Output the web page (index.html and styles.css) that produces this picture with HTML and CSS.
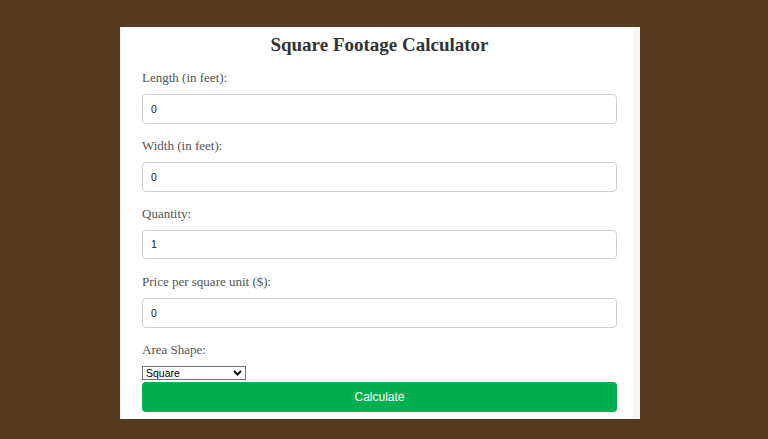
FILE: index.html
```html
<!DOCTYPE html>
<html lang="en">
<head>
<meta charset="utf-8">
<title>Square Footage Calculator</title>
<link rel="stylesheet" href="styles.css">
</head>
<body>
<div class="page">
  <div class="card">
    <h2 class="title">Square Footage Calculator</h2>
    <label class="label" for="length">Length (in feet):</label>
    <input class="field" id="length" type="number" value="0">
    <label class="label" for="width">Width (in feet):</label>
    <input class="field" id="width" type="number" value="0">
    <label class="label" for="qty">Quantity:</label>
    <input class="field" id="qty" type="number" value="1">
    <label class="label label--spaced" for="price">Price per square unit ($):</label>
    <input class="field" id="price" type="number" value="0">
    <label class="label" for="shape">Area Shape:</label>
    <div class="select-wrap">
      <select class="select" id="shape">
        <option>Square</option>
        <option>Rectangle</option>
        <option>Circle</option>
      </select>
      <svg class="chevron" width="9" height="6" viewBox="0 0 9 6" aria-hidden="true"><path d="M1 1l3.5 3.5L8 1" fill="none" stroke="#111" stroke-width="2"/></svg>
    </div>
    <button class="btn" type="button">Calculate</button>
  </div>
</div>
</body>
</html>
```
FILE: styles.css
```css
html, body {
  margin: 0;
  padding: 0;
}
body {
  background: #573a22;
  font-family: "Liberation Serif", "Times New Roman", serif;
  height: 439px;
  overflow: hidden;
}
.page {
  padding: 27px 0 0 120px;
}
.card {
  width: 520px;
  height: 392px;
  box-sizing: border-box;
  background: #fff;
  border-left: 2px solid #edf3f9;
  border-right: 7px solid #f6f6f7;
  padding: 7px 16px 7px 20px;
  display: flex;
  flex-direction: column;
  align-items: stretch;
}
.title {
  margin: 0 0 14px;
  font-size: 19px;
  line-height: 22px;
  font-weight: bold;
  color: #333;
  text-align: center;
}
.label {
  display: block;
  font-size: 13px;
  line-height: 16px;
  color: #555;
  margin: 0 0 8px;
}
.label--spaced {
  margin-top: 1px;
}
.field {
  display: block;
  box-sizing: border-box;
  width: 100%;
  height: 30px;
  margin: 0 0 14px;
  padding: 0 8px;
  border: 1px solid #d0d0d0;
  border-radius: 4px;
  background: #fff;
  font-family: "Liberation Sans", Arial, sans-serif;
  font-size: 10.5px;
  color: #222;
  -moz-appearance: textfield;
}
.field::-webkit-outer-spin-button,
.field::-webkit-inner-spin-button {
  -webkit-appearance: none;
  margin: 0;
}
.select-wrap {
  position: relative;
  width: 104px;
  height: 14px;
  margin: 0 0 1px;
}
.select {
  -webkit-appearance: none;
  appearance: none;
  display: block;
  box-sizing: border-box;
  width: 104px;
  height: 14px;
  margin: 0;
  padding: 0 0 0 3px;
  border: 1px solid #767676;
  border-radius: 0;
  background: #fff;
  font-family: "Liberation Sans", Arial, sans-serif;
  font-size: 10.5px;
  line-height: 12px;
  color: #000;
}
.chevron {
  position: absolute;
  right: 4px;
  top: 4px;
  pointer-events: none;
}
.btn {
  display: block;
  width: 100%;
  height: 30px;
  margin: 1px 0 0;
  border: none;
  border-radius: 4px;
  background: #00b050;
  color: #fff;
  font-family: "Liberation Sans", Arial, sans-serif;
  font-size: 12px;
  cursor: pointer;
}
```
